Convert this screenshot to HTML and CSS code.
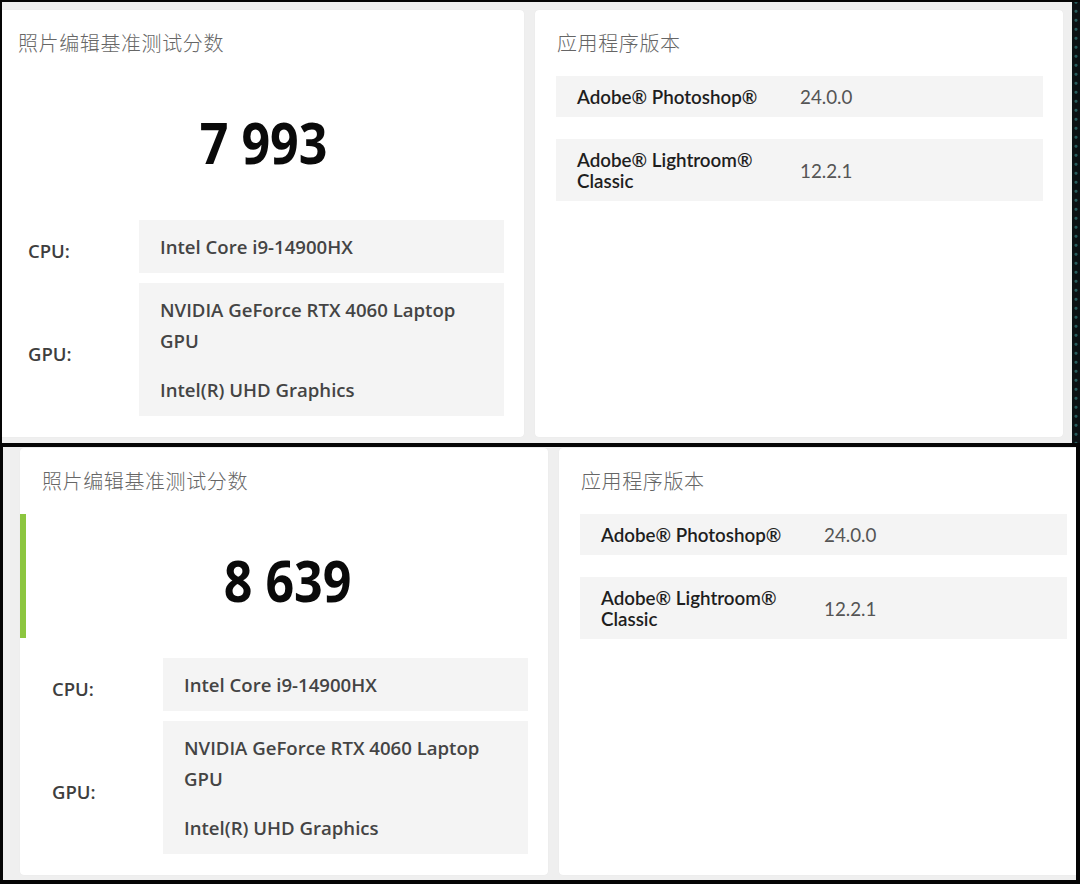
FILE: index.html
```html
<!DOCTYPE html>
<html lang="zh-CN">
<head>
<meta charset="utf-8">
<title>照片编辑基准测试分数</title>
<link rel="stylesheet" href="styles.css">
</head>
<body>
<div class="shot shot-top">
  <div class="viewport">
    <div class="page page-top">
      <section class="card">
        <h2 class="card-title">照片编辑基准测试分数</h2>
        <div class="score"><span class="score-num">7 993</span></div>
        <div class="spec-row">
          <div class="spec-label">CPU:</div>
          <div class="spec-box"><p>Intel Core i9-14900HX</p></div>
        </div>
        <div class="spec-row">
          <div class="spec-label">GPU:</div>
          <div class="spec-box"><p>NVIDIA GeForce RTX 4060 Laptop GPU</p><p>Intel(R) UHD Graphics</p></div>
        </div>
      </section>
      <section class="card">
        <h2 class="card-title">应用程序版本</h2>
        <div class="app-row"><div class="app-name">Adobe® Photoshop®</div><div class="app-ver">24.0.0</div></div>
        <div class="app-row"><div class="app-name">Adobe® Lightroom® Classic</div><div class="app-ver">12.2.1</div></div>
      </section>
    </div>
  </div>
  <div class="edge"></div>
</div>
<div class="shot shot-bottom">
  <div class="viewport">
    <div class="page page-bottom">
      <section class="card">
        <h2 class="card-title">照片编辑基准测试分数</h2>
        <div class="score score-active"><span class="score-num">8 639</span></div>
        <div class="spec-row">
          <div class="spec-label">CPU:</div>
          <div class="spec-box"><p>Intel Core i9-14900HX</p></div>
        </div>
        <div class="spec-row">
          <div class="spec-label">GPU:</div>
          <div class="spec-box"><p>NVIDIA GeForce RTX 4060 Laptop GPU</p><p>Intel(R) UHD Graphics</p></div>
        </div>
      </section>
      <section class="card">
        <h2 class="card-title">应用程序版本</h2>
        <div class="app-row"><div class="app-name">Adobe® Photoshop®</div><div class="app-ver">24.0.0</div></div>
        <div class="app-row"><div class="app-name">Adobe® Lightroom® Classic</div><div class="app-ver">12.2.1</div></div>
      </section>
    </div>
  </div>
</div>
</body>
</html>
```

FILE: styles.css
```css
* { box-sizing: border-box; }
html, body { margin: 0; padding: 0; }
body {
  width: 1080px;
  height: 884px;
  background: #000;
  overflow: hidden;
  font-family: "Open Sans", "Noto Sans CJK SC", sans-serif;
}

.shot {
  display: flex;
  width: 1080px;
  overflow: hidden;
  border-style: solid;
  border-color: #050505;
}
.shot-top {
  height: 443px;
  border-width: 2px 0 0 2px;
}
.shot-bottom {
  height: 441px;
  border-width: 4px 4px 4px 3px;
}

.viewport {
  overflow: hidden;
  background: #efefef;
  height: 100%;
}
.shot-top .viewport { width: 1070px; }
.shot-bottom .viewport { flex: 1; }

.edge {
  flex: 1;
  background:
    radial-gradient(circle at 50% 70%, rgba(60,150,150,0.55) 0 1px, transparent 2px) 0 300px / 8px 9px repeat-y,
    #0c1114;
}

.page {
  display: flex;
  gap: 11px;
  width: max-content;
}
.page-top { padding-top: 8px; margin-left: -6px; }
.page-bottom { padding-top: 1px; margin-left: 17px; }

.card {
  width: 528px;
  height: 427px;
  background: #fff;
  border-radius: 4px;
  box-shadow: 0 0 1px rgba(0,0,0,0.08);
  padding-top: 21px;
}

.card-title {
  margin: 0 0 21px 22px;
  font-family: "Noto Sans CJK SC", sans-serif;
  font-weight: 300;
  font-size: 20px;
  line-height: 24px;
  letter-spacing: 0.6px;
  color: #666;
}

.score {
  height: 124px;
  display: flex;
  align-items: center;
  justify-content: center;
  padding-top: 8px;
  margin-bottom: 20px;
  border-left: 6px solid transparent;
}
.score-active { border-left-color: #8cc63f; }
.score-num {
  display: inline-block;
  font-family: "Open Sans", sans-serif;
  font-weight: 700;
  font-size: 57px;
  transform: scaleX(0.88);
  color: #0a0a0a;
  line-height: 1;
  margin-left: 2px;
}

.spec-row {
  display: grid;
  grid-template-columns: 111px 365px;
  align-items: center;
  margin-left: 32px;
  margin-bottom: 10px;
}
.spec-label {
  font-weight: 600;
  font-size: 18.5px;
  color: #3e3e3e;
  padding-top: 8px;
}
.spec-box {
  background: #f4f4f4;
  padding: 11px 21px;
  font-weight: 600;
  font-size: 18.6px;
  line-height: 31px;
  color: #444;
}
.spec-box p { margin: 0; }
.spec-box p + p { margin-top: 18px; }

.app-row {
  display: grid;
  grid-template-columns: 200px 1fr;
  column-gap: 23px;
  align-items: center;
  width: 487px;
  margin: 0 0 22px 21px;
  padding: 10px 21px;
  background: #f4f4f4;
  font-family: "Lato", sans-serif;
  font-size: 18.8px;
  line-height: 21px;
}
.app-name { font-weight: 600; color: #1e1e1e; }
.app-ver { font-weight: 400; color: #555; }
```
